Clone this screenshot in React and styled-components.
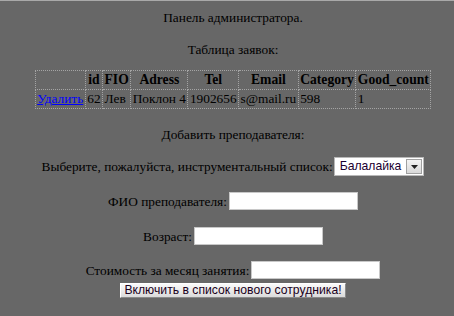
import React from 'react';
import styled, { createGlobalStyle } from 'styled-components';

const GlobalStyle = createGlobalStyle`
  html {
    background: #676767;
    border-top: 1px solid #a9a9a9;
  }
  body {
    margin: 9px 8px 8px 8px;
    font-family: "Liberation Serif", "Times New Roman", serif;
    font-size: 13.33px;
    color: #000;
  }
`

const Page = styled.div`
  text-align: center;
  padding-left: 12px;
`

const Title = styled.div`
  line-height: 15px;
`

const Caption = styled.p`
  margin: ${p => p.top}px 0 ${p => p.bottom}px;
  line-height: 15px;
`

const Table = styled.table`
  margin: 0 auto;
  border-collapse: collapse;
  border: 1px dotted #a4a4a4;
`

const Th = styled.th`
  border: 1px dotted #a4a4a4;
  padding: 1px 1.5px;
  line-height: 16px;
  font-size: 13.6px;
  text-align: center;
  white-space: nowrap;
`

const Td = styled.td`
  border: 1px dotted #a4a4a4;
  padding: 1px 1.5px;
  line-height: 16px;
  text-align: left;
  white-space: nowrap;
`

const DeleteLink = styled.a`
  color: #0000ff;
  text-decoration: underline;
`

const FormRow = styled.div`
  display: flex;
  justify-content: center;
  align-items: center;
  margin-top: ${p => p.top}px;
  line-height: 15px;
`

const TextInput = styled.input`
  box-sizing: border-box;
  width: 129px;
  height: 18px;
  border: 1px solid #c8c8c8;
  background: #fff;
  margin: 0 0 0 2px;
  padding: 0 2px;
`

const SelectBox = styled.span`
  display: inline-flex;
  align-items: center;
  gap: 5px;
  box-sizing: border-box;
  height: 19px;
  margin-left: 1px;
  border: 1px solid #b8b8b8;
  background: #fff;
  padding: 1px 1px 1px 5px;
`

const SelectValue = styled.span`
  font-family: "Liberation Sans", Arial, sans-serif;
  font-size: 12.2px;
  color: #1a0030;
  line-height: 15px;
`

const ArrowBox = styled.span`
  width: 16px;
  height: 15px;
  box-sizing: border-box;
  border: 1px solid #a0a0a0;
  background: linear-gradient(#f4f4f4, #d8d8d8);
  display: flex;
  align-items: center;
  justify-content: center;
`

const ButtonRow = styled.div`
  display: flex;
  justify-content: center;
  margin-top: 4px;
`

const SubmitButton = styled.button`
  box-sizing: border-box;
  height: 15px;
  margin: 0;
  padding: 0 3px;
  border: 1px solid #fff;
  border-right-color: #8a8a8a;
  border-bottom-color: #8a8a8a;
  background: linear-gradient(#fafafa, #dadada);
  font-family: "Liberation Sans", Arial, sans-serif;
  font-size: 12.2px;
  line-height: 13px;
  color: #1a0020;
`

export default function App() {
  return (
    <>
      <GlobalStyle />
      <Page>
        <Title>Панель администратора.</Title>
        <Caption top={17} bottom={13}>Таблица заявок:</Caption>
        <Table>
          <thead>
            <tr>
              <Th></Th>
              <Th>id</Th>
              <Th>FIO</Th>
              <Th>Adress</Th>
              <Th>Tel</Th>
              <Th>Email</Th>
              <Th>Category</Th>
              <Th>Good_count</Th>
            </tr>
          </thead>
          <tbody>
            <tr>
              <Td><DeleteLink href="#">Удалить</DeleteLink></Td>
              <Td>62</Td>
              <Td>Лев</Td>
              <Td>Поклон 4</Td>
              <Td>1902656</Td>
              <Td>s@mail.ru</Td>
              <Td>598</Td>
              <Td>1</Td>
            </tr>
          </tbody>
        </Table>
        <Caption top={18} bottom={0}>Добавить преподавателя:</Caption>
        <FormRow top={15}>
          Выберите, пожалуйста, инструментальный список:
          <SelectBox>
            <SelectValue>Балалайка</SelectValue>
            <ArrowBox>
              <svg width="7" height="4" viewBox="0 0 7 4">
                <path d="M0 0h7L3.5 4z" fill="#222" />
              </svg>
            </ArrowBox>
          </SelectBox>
        </FormRow>
        <FormRow top={16}>
          ФИО преподавателя:<TextInput type="text" />
        </FormRow>
        <FormRow top={17}>
          Возраст:<TextInput type="text" />
        </FormRow>
        <FormRow top={16}>
          Стоимость за месяц занятия:<TextInput type="text" />
        </FormRow>
        <ButtonRow>
          <SubmitButton type="button">Включить в список нового сотрудника!</SubmitButton>
        </ButtonRow>
      </Page>
    </>
  );
}
